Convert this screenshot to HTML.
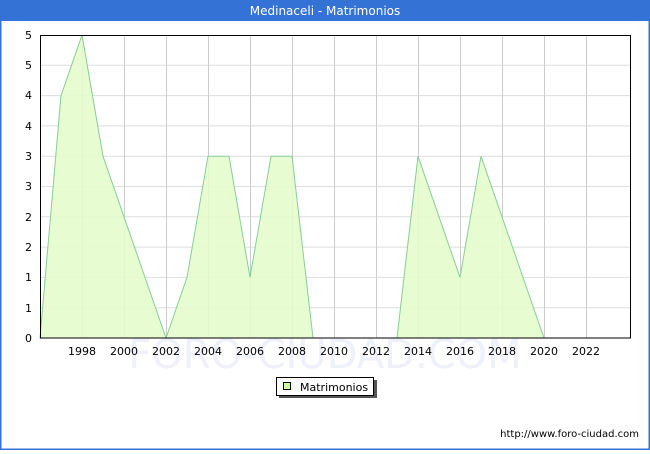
<!DOCTYPE html>
<html><head><meta charset="utf-8"><style>
body{margin:0;width:650px;height:450px;overflow:hidden;font-family:"DejaVu Sans","Liberation Sans",sans-serif;}
</style></head><body>
<svg width="650" height="450" xmlns="http://www.w3.org/2000/svg" font-family="DejaVu Sans, Liberation Sans, sans-serif">
<rect x="0" y="0" width="650" height="450" fill="#fff"/>
<rect x="0.5" y="0.5" width="649" height="449" fill="none" stroke="#3473d5" stroke-width="2"/>
<rect x="0" y="0" width="650" height="21" fill="#3473d5"/>
<text x="325" y="15" font-size="12" fill="#fff" text-anchor="middle">Medinaceli - Matrimonios</text>
<text x="325" y="368" font-size="40" fill="#eef0fa" text-anchor="middle">FORO-CIUDAD.COM</text>
<g stroke="#dddddd" stroke-width="1">
<line x1="40" y1="65.3" x2="631" y2="65.3"/><line x1="40" y1="95.6" x2="631" y2="95.6"/><line x1="40" y1="125.9" x2="631" y2="125.9"/><line x1="40" y1="156.2" x2="631" y2="156.2"/><line x1="40" y1="186.5" x2="631" y2="186.5"/><line x1="40" y1="216.8" x2="631" y2="216.8"/><line x1="40" y1="247.1" x2="631" y2="247.1"/><line x1="40" y1="277.4" x2="631" y2="277.4"/><line x1="40" y1="307.7" x2="631" y2="307.7"/>
</g>
<g stroke="#cccccc" stroke-width="1">
<line x1="82.5" y1="35" x2="82.5" y2="338"/><line x1="124.5" y1="35" x2="124.5" y2="338"/><line x1="166.5" y1="35" x2="166.5" y2="338"/><line x1="208.5" y1="35" x2="208.5" y2="338"/><line x1="250.5" y1="35" x2="250.5" y2="338"/><line x1="292.5" y1="35" x2="292.5" y2="338"/><line x1="334.5" y1="35" x2="334.5" y2="338"/><line x1="376.5" y1="35" x2="376.5" y2="338"/><line x1="418.5" y1="35" x2="418.5" y2="338"/><line x1="460.5" y1="35" x2="460.5" y2="338"/><line x1="502.5" y1="35" x2="502.5" y2="338"/><line x1="544.5" y1="35" x2="544.5" y2="338"/><line x1="586.5" y1="35" x2="586.5" y2="338"/>
</g>
<polygon fill="#e4fdcc" fill-opacity="0.9" stroke="#88cc99" stroke-width="1" points="40,338 61,95.6 82,35 103,156.2 124,216.8 145,277.4 166,338 187,277.4 208,156.2 229,156.2 250,277.4 271,156.2 292,156.2 313,338 397,338 418,156.2 439,216.8 460,277.4 481,156.2 502,216.8 523,277.4 544,338"/>
<rect x="40.5" y="35.5" width="590" height="302.5" fill="none" stroke="#000" stroke-width="1"/>
<g font-size="11" fill="#000" text-anchor="end">
<text x="32" y="39">5</text><text x="32" y="69">5</text><text x="32" y="99">4</text><text x="32" y="130">4</text><text x="32" y="160">3</text><text x="32" y="190">3</text><text x="32" y="221">2</text><text x="32" y="251">2</text><text x="32" y="281">1</text><text x="32" y="312">1</text><text x="32" y="342">0</text>
</g>
<g font-size="11" fill="#000" text-anchor="middle">
<text x="82" y="355">1998</text><text x="124" y="355">2000</text><text x="166" y="355">2002</text><text x="208" y="355">2004</text><text x="250" y="355">2006</text><text x="292" y="355">2008</text><text x="334" y="355">2010</text><text x="376" y="355">2012</text><text x="418" y="355">2014</text><text x="460" y="355">2016</text><text x="502" y="355">2018</text><text x="544" y="355">2020</text><text x="586" y="355">2022</text>
</g>
<rect x="279" y="380" width="98" height="18" fill="#555"/>
<rect x="276.5" y="377.5" width="97" height="18" fill="#fff" stroke="#000"/>
<rect x="283.5" y="382.5" width="7" height="7" fill="#ccff99" stroke="#000"/>
<text x="300" y="391" font-size="11" fill="#000">Matrimonios</text>
<text x="639" y="437" font-size="10" fill="#000" text-anchor="end">http://www.foro-ciudad.com</text>
</svg>
</body></html>
